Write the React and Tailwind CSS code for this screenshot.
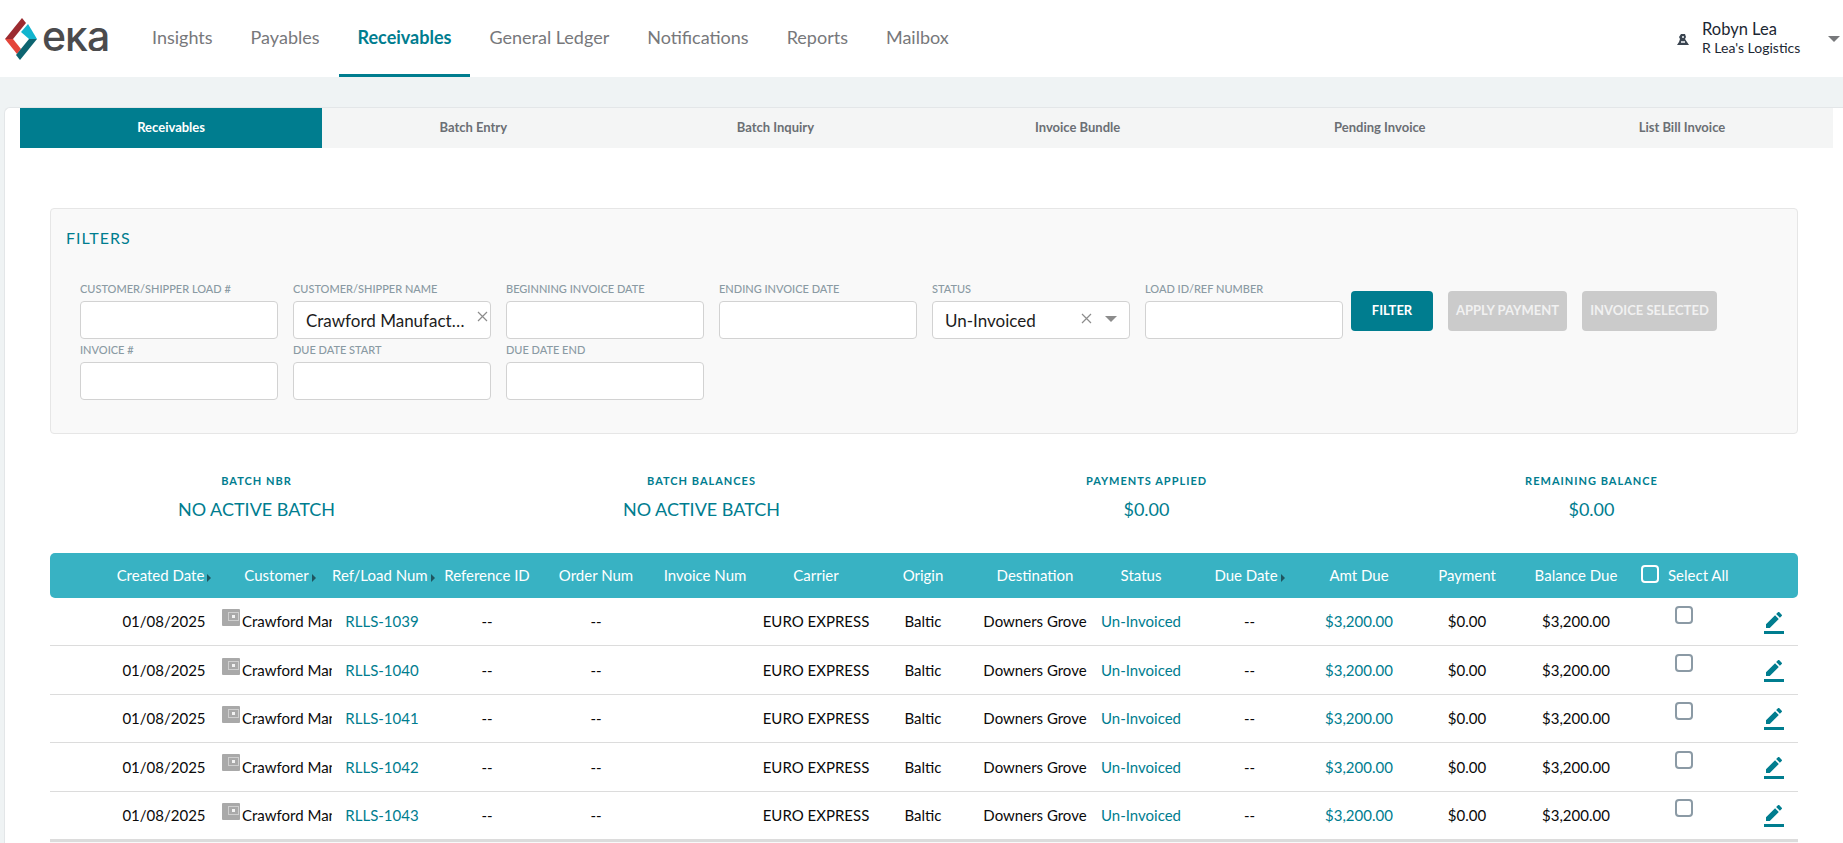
const navItems = ["Insights", "Payables", "Receivables", "General Ledger", "Notifications", "Reports", "Mailbox"];
const tabs = ["Receivables", "Batch Entry", "Batch Inquiry", "Invoice Bundle", "Pending Invoice", "List Bill Invoice"];
const gridCols = "grid grid-cols-[58px_112px_112px_100px_110px_108px_110px_112px_102px_122px_90px_127px_92px_124px_94px_122px_58px]";
const loads = ["RLLS-1039", "RLLS-1040", "RLLS-1041", "RLLS-1042", "RLLS-1043"];

function Logo() {
  return (
    <div className="flex items-center w-[114px] pl-[5px] h-full">
      <svg width="32" height="42" viewBox="5 11 32 42" className="shrink-0">
        <polygon points="5,32 22,11 26,16 13,32" fill="#9c2b30" />
        <polygon points="5,32 13,32 21,42 17,47" fill="#e4453a" />
        <polygon points="21,25 28,17 37,32 29,32" fill="#12b5cf" />
        <polygon points="37,32 20,53 16,48 29,32" fill="#0d6470" />
      </svg>
      <div className="ml-[5px] h-[23px] overflow-hidden w-[66px] mb-[-2px]">
        <span className="block font-['Inter',sans-serif] text-[41px] leading-[23px] tracking-[-1px] font-medium text-[#4b4b4d] mt-[-3px]">eka</span>
      </div>
    </div>
  );
}

function Header() {
  return (
    <header className="h-[77px] bg-white flex items-stretch shrink-0">
      <Logo />
      <nav className="flex items-stretch ml-[19px]">
        {navItems.map((item) => {
          const active = item === "Receivables";
          return (
            <a key={item} className={active ? "flex items-center px-[19px] text-[18px] font-bold text-[#007d8f] border-b-[3px] border-[#007d8f] pt-[1px] mt-0" : "flex items-center px-[19px] text-[18px] text-[#77787b] pb-[2px]"}>
              {item}
            </a>
          );
        })}
      </nav>
      <div className="ml-auto flex items-center pr-[3px]">
        <svg width="12" height="13" viewBox="0 0 12 13" className="mr-[13px] mt-[1px]">
          <path d="M4 1h4l1 3-1 2 2 3 2 3H0l2-3 1-3-1-2z" fill="#3a4450" />
          <path d="M5 3h2v2H5zM4 8h4v2H4z" fill="#c7cbd0" />
        </svg>
        <div className="text-[#1c2733] mr-[17px] w-[109px]">
          <div className="text-[16.5px] leading-[20px] mb-[-1px]">Robyn Lea</div>
          <div className="text-[14px] leading-[20px]">R Lea's Logistics</div>
        </div>
        <div className="w-0 h-0 border-x-[6px] border-x-transparent border-t-[6px] border-t-[#77787b]" />
      </div>
    </header>
  );
}

function Tabs() {
  return (
    <div className="flex ml-[15px] mr-[10px] h-[40px]">
      {tabs.map((t, i) => (
        <div key={t} className={i === 0 ? "flex-1 flex items-center justify-center bg-[#007d8f] text-white font-bold text-[13px]" : "flex-1 flex items-center justify-center bg-[#f4f5f5] text-[#6b6f74] font-bold text-[13px]"}>
          {t}
        </div>
      ))}
    </div>
  );
}

function Field({ label, children }) {
  return (
    <div className="w-[198px]">
      <div className="h-[23px] flex items-center text-[11px] font-medium uppercase text-[#8a9aa3] whitespace-nowrap">{label}</div>
      <div className="relative h-[38px] bg-white border border-[#d2d2d2] rounded-[4px] flex items-center text-[#1c1c1c] text-[17px]">{children}</div>
    </div>
  );
}

function Cross({ className }) {
  return (
    <svg width="11" height="11" viewBox="0 0 11 11" className={className}>
      <path d="M1 1l9 9M10 1l-9 9" stroke="#8c8c8c" strokeWidth="1.2" />
    </svg>
  );
}

function Filters() {
  return (
    <section className="mx-[45px] mt-[60px] h-[226px] bg-[#f9f9f9] border border-[#e6e6e6] rounded-[4px] relative pt-[17px]">
      <h2 className="ml-[15px] text-[16px] leading-[24px] tracking-[1px] text-[#007d8f]">FILTERS</h2>
      <div className="mt-[28px] ml-[29px] flex">
        <div className="grid grid-cols-[198px_198px_198px_198px_198px_198px] gap-x-[15px] gap-y-[-2px] w-[1263px]">
          <Field label="Customer/Shipper Load #" />
          <Field label="Customer/Shipper Name">
            <span className="pl-[12px] mt-[1px] w-[176px] truncate">Crawford Manufacturing</span>
            <Cross className="absolute right-[2px] top-[9px]" />
          </Field>
          <Field label="Beginning Invoice Date" />
          <Field label="Ending Invoice Date" />
          <Field label="Status">
            <span className="pl-[12px] mt-[1px]">Un-Invoiced</span>
            <Cross className="absolute right-[37px] top-[11px]" />
            <div className="absolute right-[12px] top-[14px] w-0 h-0 border-x-[6px] border-x-transparent border-t-[6px] border-t-[#8c8c8c]" />
          </Field>
          <Field label="Load ID/Ref Number" />
          <Field label="Invoice #" />
          <Field label="Due Date Start" />
          <Field label="Due Date End" />
        </div>
        <div className="flex gap-[15px] ml-[8px] mt-[13px] h-[40px] text-[13px] font-bold whitespace-nowrap">
          <button className="w-[82px] rounded-[4px] bg-[#007d8f] text-white">FILTER</button>
          <button className="w-[119px] rounded-[4px] bg-[#cbcbcb] text-[#f1f1f1]">APPLY PAYMENT</button>
          <button className="w-[135px] rounded-[4px] bg-[#cbcbcb] text-[#f1f1f1]">INVOICE SELECTED</button>
        </div>
      </div>
    </section>
  );
}

function Summary() {
  const items = [["Batch Nbr", "NO ACTIVE BATCH"], ["Batch Balances", "NO ACTIVE BATCH"], ["Payments Applied", "$0.00"], ["Remaining Balance", "$0.00"]];
  return (
    <section className="grid grid-cols-4 mx-[29px] mt-[37px] text-center text-[#007d8f]">
      {items.map(([a, b]) => (
        <div key={a}>
          <div className="text-[11px] font-bold tracking-[1px] uppercase leading-[20px]">{a}</div>
          <div className="text-[18px] leading-[26px] mt-[5px]">{b}</div>
        </div>
      ))}
    </section>
  );
}

function Caret() {
  return <span className="inline-block ml-[3px] w-0 h-0 border-y-[4px] border-y-transparent border-l-[4px] border-l-[#1f5560] align-[-1px]" />;
}

function Wallet() {
  return (
    <svg width="18" height="18" viewBox="0 0 18 18" className="shrink-0 mb-[7px] mr-[2px]">
      <path d="M1 0h16a1 1 0 0 1 1 1v15a1 1 0 0 1-1 1H1a1 1 0 0 1-1-1V1a1 1 0 0 1 1-1z" fill="#a9a9a9" />
      <path d="M6 3h11v9H6z" fill="#cfcfcf" />
      <path d="M7 4h9v7H7z" fill="#a9a9a9" />
      <path d="M10 6h3v3h-3z" fill="#f2f2f2" />
    </svg>
  );
}

function Pen() {
  return (
    <svg width="24" height="24" viewBox="0 0 24 24" fill="#007d8f">
      <path d="M22 24H2v-3h20v3zM13.06 5.19l3.75 3.75L7.75 18H4v-3.75l9.06-9.06zm4.82 2.68-3.75-3.75 1.83-1.83c.39-.39 1.02-.39 1.41 0l2.34 2.34c.39.39.39 1.02 0 1.41l-1.83 1.83z" />
    </svg>
  );
}

function Table() {
  const head = ["Reference ID", "Order Num", "Invoice Num", "Carrier", "Origin", "Destination", "Status"];
  return (
    <section className="mx-[45px] mt-[31px]">
      <div className={gridCols + " h-[45px] bg-[#38b2c3] rounded-[5px] items-center text-center text-white text-[15px] whitespace-nowrap"}>
        <div />
        <div>Created Date<Caret /></div>
        <div className="pl-[8px]">Customer<Caret /></div>
        <div>Ref/Load Num<Caret /></div>
        {head.map((h) => <div key={h}>{h}</div>)}
        <div>Due Date<Caret /></div>
        <div>Amt Due</div>
        <div>Payment</div>
        <div>Balance Due</div>
        <div className="flex items-center pl-[18px] gap-[9px]">
          <span className="w-[18px] h-[18px] rounded-[4px] border-2 border-white mb-[3px]" />
          <span>Select All</span>
        </div>
        <div />
      </div>
      {loads.map((id) => (
        <div key={id} className={gridCols + " h-[48.4px] border-b border-[#dcdcdc] items-center text-center text-[15px] text-[#0a0a0a] whitespace-nowrap"}>
          <div />
          <div>01/08/2025</div>
          <div className="flex items-center pl-[2px] overflow-hidden">
            <Wallet />
            <span className="overflow-hidden">Crawford Manufacturing</span>
          </div>
          <div className="text-[#007d8f]">{id}</div>
          <div>--</div>
          <div>--</div>
          <div />
          <div>EURO EXPRESS</div>
          <div>Baltic</div>
          <div>Downers Grove</div>
          <div className="text-[#007d8f]">Un-Invoiced</div>
          <div>--</div>
          <div className="text-[#007d8f]">$3,200.00</div>
          <div>$0.00</div>
          <div>$3,200.00</div>
          <div className="flex justify-center">
            <span className="w-[18px] h-[18px] rounded-[4px] border-2 border-[#8b9aa5] mb-[14px]" />
          </div>
          <div className="flex justify-center"><Pen /></div>
        </div>
      ))}
      <div className="h-[4px] bg-[#f9f9f9] border-t-[2px] border-[#dcdcdc]" />
    </section>
  );
}

export default function App() {
  return (
    <div className="h-[843px] w-[1843px] overflow-hidden bg-[#eff3f4] font-['Lato',sans-serif] flex flex-col">
      <Header />
      <main className="mt-[30px] ml-[4px] flex-1 bg-white border-l border-t border-[#e3e6e8] rounded-tl-[6px]">
        <Tabs />
        <Filters />
        <Summary />
        <Table />
      </main>
    </div>
  );
}
